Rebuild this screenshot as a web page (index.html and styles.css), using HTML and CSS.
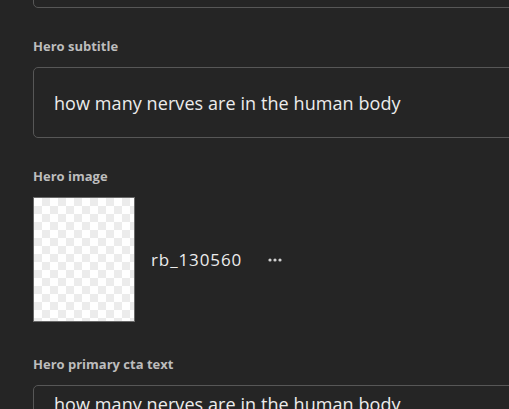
FILE: index.html
```html
<!DOCTYPE html>
<html lang="en">
<head>
<meta charset="utf-8">
<title>Hero fields</title>
<link rel="stylesheet" href="styles.css">
</head>
<body>
<div class="form">
  <div class="field field-top">
    <div class="input input-cut"></div>
  </div>
  <div class="field">
    <div class="label">Hero subtitle</div>
    <div class="input">how many nerves are in the human body</div>
  </div>
  <div class="field">
    <div class="label">Hero image</div>
    <div class="image-row">
      <div class="thumb"></div>
      <div class="filename">rb_130560</div>
      <button class="more" aria-label="More">
        <svg width="14" height="4" viewBox="0 0 14 4"><circle cx="2" cy="2" r="1.6" fill="#d0d0d0"/><circle cx="7" cy="2" r="1.6" fill="#d0d0d0"/><circle cx="12" cy="2" r="1.6" fill="#d0d0d0"/></svg>
      </button>
    </div>
  </div>
  <div class="field">
    <div class="label">Hero primary cta text</div>
    <div class="input input-textarea">how many nerves are in the human body</div>
  </div>
</div>
</body>
</html>
```
FILE: styles.css
```css
html, body {
  margin: 0;
  padding: 0;
  background: #252525;
  overflow: hidden;
}
body {
  font-family: "Open Sans", "DejaVu Sans", sans-serif;
  color: #e6e6e6;
}
.form {
  padding-left: 33px;
  width: 560px;
  margin-top: -63px;
  display: flex;
  flex-direction: column;
  gap: 29px;
}
.field {
  display: flex;
  flex-direction: column;
  gap: 12px;
}
.label {
  font-size: 13px;
  font-weight: 700;
  color: #bdbdbd;
  line-height: 18px;
}
.input {
  box-sizing: border-box;
  height: 71px;
  border: 1px solid #575757;
  border-radius: 5px;
  padding: 0 20px;
  display: flex;
  align-items: center;
  font-size: 18px;
  color: #ececec;
  letter-spacing: 0.08px;
}
.input-textarea {
  align-items: flex-start;
  padding-top: 6px;
}
.image-row {
  display: flex;
  align-items: center;
  margin-bottom: 4px;
}
.thumb {
  box-sizing: border-box;
  width: 102px;
  height: 125px;
  border: 1px solid #6a6a6a;
  background-color: #ffffff;
  background-image:
    linear-gradient(45deg, #ececec 25%, transparent 25%, transparent 75%, #ececec 75%),
    linear-gradient(45deg, #ececec 25%, transparent 25%, transparent 75%, #ececec 75%);
  background-size: 16px 16px;
  background-position: 0 0, 8px 8px;
}
.filename {
  margin-left: 16px;
  font-size: 17px;
  letter-spacing: 0.9px;
  color: #ececec;
}
.more {
  margin-left: 26px;
  background: none;
  border: 0;
  padding: 0;
  display: flex;
  align-items: center;
}
```
